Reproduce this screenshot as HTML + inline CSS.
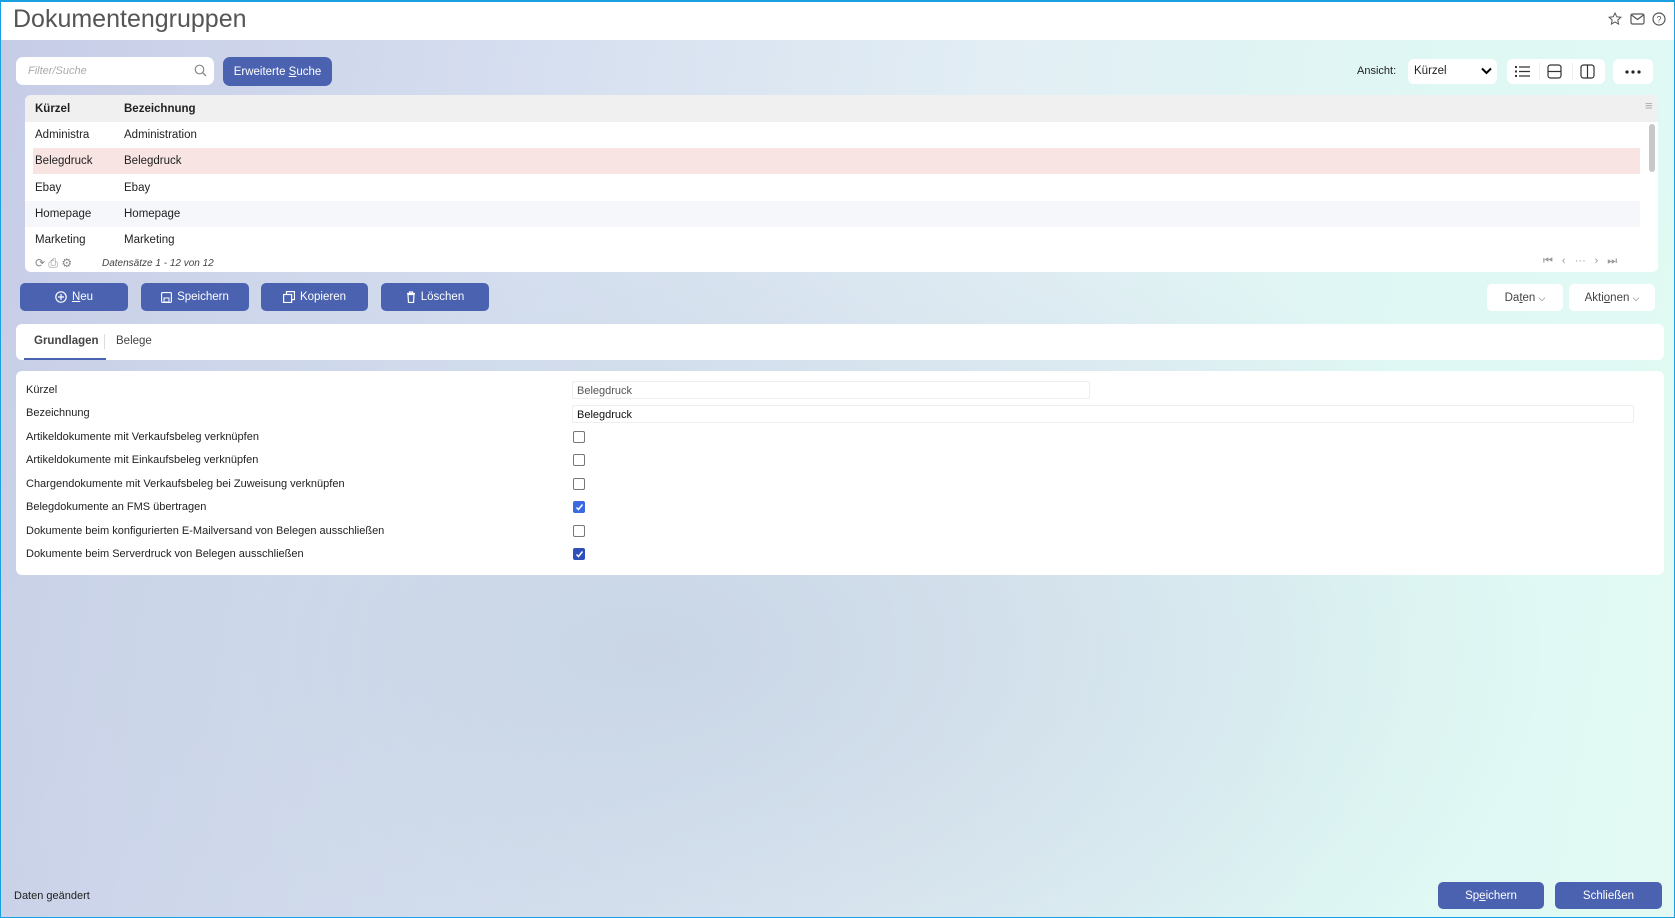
<!DOCTYPE html>
<html><head><meta charset="utf-8"><style>
*{box-sizing:border-box;margin:0;padding:0}
body{width:1675px;height:918px;overflow:hidden;font-family:"Liberation Sans",sans-serif;font-size:11.5px;color:#222;position:relative;
background:radial-gradient(ellipse 900px 500px at 650px 650px,#c9d6e6 0%,rgba(200,215,230,0) 100%),linear-gradient(100deg,#c6cce6 0%,#d6dff0 30%,#e2eef4 55%,#dff8f4 80%,#e2faf3 100%)}
.frame{position:absolute;left:0;top:0;width:1675px;height:918px;border:1px solid #1aa0e0;border-top-width:2px;pointer-events:none}
.hdr{position:absolute;left:0;top:0;width:1675px;height:40px;background:#fff}
.hdr h1{position:absolute;left:13px;top:5px;font-weight:normal;font-size:25px;color:#555}
.abs{position:absolute}
.btn{position:absolute;background:#4a62b0;color:#fff;border-radius:5px;display:flex;align-items:center;justify-content:center;font-size:11.5px;gap:5px}
.wbtn{position:absolute;background:#fff;border-radius:5px;display:flex;align-items:center;justify-content:center;font-size:11.5px;color:#444}
.card{position:absolute;background:#fff;border-radius:6px}
.row{position:absolute;left:0;right:18px;height:26px}
.row span{position:absolute;top:7px}
.lbl{position:absolute;left:26px;font-size:11px;color:#222}
.cb{position:absolute;left:573px;width:12px;height:12px;border:1px solid #777;border-radius:2px;background:#fff}
.cb.on{background:#3b6ae0;border-color:#3b6ae0}
</style></head><body>
<div class="hdr"><h1>Dokumentengruppen</h1>
<svg class="abs" style="left:1608px;top:12px" width="14" height="14" viewBox="0 0 14 14"><path d="M7 1l1.8 3.8 4 .5-3 2.8.8 4L7 10l-3.6 2.1.8-4-3-2.8 4-.5z" fill="none" stroke="#555" stroke-width="1"/></svg>
<svg class="abs" style="left:1630px;top:13px" width="15" height="12" viewBox="0 0 15 12"><rect x="1" y="1" width="13" height="10" rx="1.5" fill="none" stroke="#555" stroke-width="1.2"/><path d="M1.5 2l6 4.5 6-4.5" fill="none" stroke="#555" stroke-width="1.2"/></svg>
<svg class="abs" style="left:1652px;top:12px" width="14" height="14" viewBox="0 0 14 14"><circle cx="7" cy="7" r="6" fill="none" stroke="#555" stroke-width="1.2"/><text x="7" y="10.5" font-size="9" text-anchor="middle" fill="#555" font-family="Liberation Sans">?</text></svg>
</div>

<div class="card" style="left:16px;top:57px;width:198px;height:28px;border-radius:7px"><span class="abs" style="left:12px;top:8px;font-style:italic;color:#aaa;font-size:11px">Filter/Suche</span>
<svg class="abs" style="left:178px;top:7px" width="13" height="13" viewBox="0 0 13 13"><circle cx="5.5" cy="5.5" r="4.3" fill="none" stroke="#888" stroke-width="1.2"/><path d="M8.7 8.7l3.3 3.3" stroke="#888" stroke-width="1.3"/></svg></div>
<div class="btn" style="left:223px;top:57px;width:109px;height:29px;border-radius:7px"><span>Erweiterte <u>S</u>uche</span></div>

<span class="abs" style="left:1357px;top:65px;font-size:11px">Ansicht:</span>
<div class="card" style="left:1408px;top:59px;width:89px;height:25px"><span class="abs" style="left:6px;top:6px;font-size:11.5px">Kürzel</span><svg class="abs" style="left:73px;top:8px" width="11" height="8" viewBox="0 0 11 8"><path d="M1 1.5l4.5 4.5 4.5-4.5" fill="none" stroke="#000" stroke-width="2"/></svg></div>
<div class="card" style="left:1507px;top:59px;width:98px;height:25px">
<svg class="abs" style="left:8px;top:6px" width="16" height="13" viewBox="0 0 16 13"><g fill="#333"><rect x="0" y="1" width="2" height="2"/><rect x="0" y="5.5" width="2" height="2"/><rect x="0" y="10" width="2" height="2"/></g><path d="M4 2h11M4 6.5h11M4 11h11" stroke="#333" stroke-width="1.2"/></svg>
<div class="abs" style="left:32px;top:4px;width:1px;height:17px;background:#eee"></div>
<svg class="abs" style="left:40px;top:5px" width="15" height="15" viewBox="0 0 15 15"><rect x="1" y="1" width="13" height="13" rx="2.5" fill="none" stroke="#333" stroke-width="1.2"/><path d="M1 7.5h13" stroke="#333" stroke-width="1.2"/></svg>
<div class="abs" style="left:65px;top:4px;width:1px;height:17px;background:#eee"></div>
<svg class="abs" style="left:73px;top:5px" width="15" height="15" viewBox="0 0 15 15"><rect x="1" y="1" width="13" height="13" rx="2.5" fill="none" stroke="#333" stroke-width="1.2"/><path d="M7.5 1v13" stroke="#333" stroke-width="1.2"/></svg>
</div>
<div class="card" style="left:1613px;top:59px;width:40px;height:25px"><svg class="abs" style="left:12px;top:11px" width="16" height="4" viewBox="0 0 16 4"><circle cx="2" cy="2" r="1.6" fill="#222"/><circle cx="8" cy="2" r="1.6" fill="#222"/><circle cx="14" cy="2" r="1.6" fill="#222"/></svg></div>

<div class="card" style="left:25px;top:95px;width:1633px;height:177px;overflow:hidden">
<div class="abs" style="left:0;top:0;width:100%;height:27px;background:#f0f0f0"><span class="abs" style="left:10px;top:8px;font-weight:bold">Kürzel</span><span class="abs" style="left:99px;top:8px;font-weight:bold">Bezeichnung</span><span class="abs" style="left:1620px;top:3px;color:#aaa;font-size:13px">≡</span></div>
<div class="row" style="top:27px"><span style="left:10px">Administra</span><span style="left:99px">Administration</span></div>
<div class="row" style="top:53px;left:8px;background:#f7e4e3"><span style="left:2px">Belegdruck</span><span style="left:91px">Belegdruck</span></div>
<div class="row" style="top:80px"><span style="left:10px">Ebay</span><span style="left:99px">Ebay</span></div>
<div class="row" style="top:106px;background:#f6f7fb"><span style="left:10px">Homepage</span><span style="left:99px">Homepage</span></div>
<div class="row" style="top:132px"><span style="left:10px">Marketing</span><span style="left:99px">Marketing</span></div>
<div class="abs" style="left:1624px;top:29px;width:6px;height:48px;background:#c8c8c8;border-radius:3px"></div>
<span class="abs" style="left:10px;top:161px;color:#888;font-size:12px">⟳ ⎙ ⚙</span>
<span class="abs" style="left:77px;top:163px;font-style:italic;color:#444;font-size:10px">Datensätze 1 - 12 von 12</span>
<span class="abs" style="left:1518px;top:160px;color:#999;font-size:11px;letter-spacing:9px">⏮‹⋯›⏭</span>
</div>

<div class="btn" style="left:20px;top:283px;width:108px;height:28px"><svg width="12" height="12" viewBox="0 0 12 12"><circle cx="6" cy="6" r="5.2" fill="none" stroke="#fff" stroke-width="1.2"/><path d="M6 3v6M3 6h6" stroke="#fff" stroke-width="1.2"/></svg><span><u>N</u>eu</span></div>
<div class="btn" style="left:141px;top:283px;width:108px;height:28px"><svg width="11" height="11" viewBox="0 0 11 11"><rect x="0.6" y="0.6" width="9.8" height="9.8" rx="1" fill="none" stroke="#fff" stroke-width="1.1"/><rect x="3" y="6" width="5" height="4" fill="none" stroke="#fff"/></svg><span>Speichern</span></div>
<div class="btn" style="left:261px;top:283px;width:107px;height:28px"><svg width="12" height="12" viewBox="0 0 12 12"><rect x="3.5" y="0.6" width="8" height="8" fill="none" stroke="#fff" stroke-width="1.2"/><rect x="0.6" y="3.5" width="8" height="8" fill="#4a62b0" stroke="#fff" stroke-width="1.2"/></svg><span>Kopieren</span></div>
<div class="btn" style="left:381px;top:283px;width:108px;height:28px"><svg width="10" height="12" viewBox="0 0 10 12"><path d="M1 2.5h8M3.5 2.5V1h3v1.5M2 3.5h6l-.5 8h-5z" fill="none" stroke="#fff" stroke-width="1.2"/></svg><span>Löschen</span></div>
<div class="wbtn" style="left:1487px;top:284px;width:76px;height:27px"><span>Da<u>t</u>en&nbsp;<span style="font-size:9px">⌵</span></span></div>
<div class="wbtn" style="left:1569px;top:284px;width:86px;height:27px"><span>Akti<u>o</u>nen&nbsp;<span style="font-size:9px">⌵</span></span></div>

<div class="card" style="left:16px;top:324px;width:1648px;height:36px">
<span class="abs" style="left:18px;top:11px;font-weight:bold;color:#444">Grundlagen</span>
<div class="abs" style="left:88px;top:10px;width:1px;height:15px;background:#ddd"></div>
<span class="abs" style="left:100px;top:11px;color:#444">Belege</span>
<div class="abs" style="left:8px;top:34px;width:82px;height:2px;background:#4a62b0"></div>
</div>

<div class="card" style="left:16px;top:371px;width:1648px;height:204px"></div>
<span class="lbl" style="top:384px">Kürzel</span>
<div class="abs" style="left:572px;top:381px;width:518px;height:18px;background:#fff;border:1px solid #eee;border-radius:2px"><span class="abs" style="left:4px;top:3px;color:#555;font-size:11px">Belegdruck</span></div>
<span class="lbl" style="top:407px">Bezeichnung</span>
<div class="abs" style="left:572px;top:405px;width:1062px;height:18px;background:#fff;border:1px solid #eee;border-radius:2px"><span class="abs" style="left:4px;top:3px;color:#111;font-size:11px">Belegdruck</span></div>
<span class="lbl" style="top:431px">Artikeldokumente mit Verkaufsbeleg verknüpfen</span><div class="cb" style="top:431px"></div>
<span class="lbl" style="top:454px">Artikeldokumente mit Einkaufsbeleg verknüpfen</span><div class="cb" style="top:454px"></div>
<span class="lbl" style="top:478px">Chargendokumente mit Verkaufsbeleg bei Zuweisung verknüpfen</span><div class="cb" style="top:478px"></div>
<span class="lbl" style="top:501px">Belegdokumente an FMS übertragen</span><div class="cb on" style="top:501px"><svg class="abs" style="left:1px;top:1px" width="9" height="9" viewBox="0 0 9 9"><path d="M1.5 4.5l2 2 4-5" fill="none" stroke="#fff" stroke-width="1.5"/></svg></div>
<span class="lbl" style="top:525px">Dokumente beim konfigurierten E-Mailversand von Belegen ausschließen</span><div class="cb" style="top:525px"></div>
<span class="lbl" style="top:548px">Dokumente beim Serverdruck von Belegen ausschließen</span><div class="cb on" style="top:548px;background:#2f50b8;border-color:#2f50b8"><svg class="abs" style="left:1px;top:1px" width="9" height="9" viewBox="0 0 9 9"><path d="M1.5 4.5l2 2 4-5" fill="none" stroke="#fff" stroke-width="1.5"/></svg></div>

<span class="abs" style="left:14px;top:890px;font-size:11px">Daten geändert</span>
<div class="btn" style="left:1438px;top:882px;width:106px;height:27px"><span>Sp<u>e</u>ichern</span></div>
<div class="btn" style="left:1555px;top:882px;width:107px;height:27px"><span>Schließen</span></div>
<div class="frame"></div>
</body></html>
